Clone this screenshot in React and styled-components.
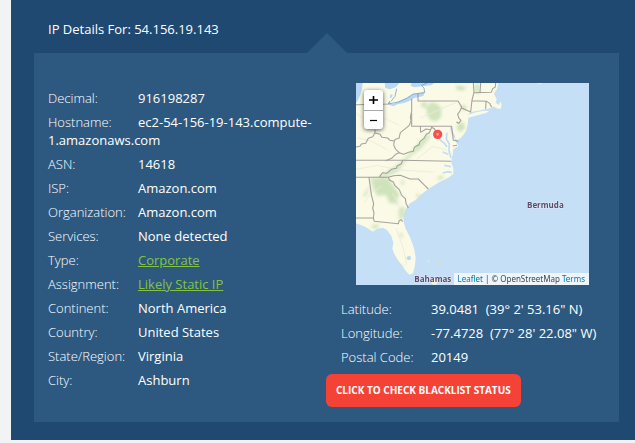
import React from "react";
import styled, { createGlobalStyle } from "styled-components";

const GlobalStyle = createGlobalStyle`
  *, *::before, *::after { box-sizing: border-box; }
  body {
    margin: 0;
    background: #f1f3f5;
    color: #fff;
    font-family: "Open Sans", sans-serif;
    font-size: 13px;
    line-height: 18px;
  }
`;

const Section = styled.main`
  margin-left: 11px;
  padding: 20px 16px 18px 23px;
  background: #1f4971;
`;

const Title = styled.h1`
  margin: 0;
  padding-left: 14px;
  font-size: 13px;
  font-weight: 400;
`;

const Arrow = styled.svg`
  display: block;
  width: 40px;
  height: 20px;
  margin: -5px auto 0;
  fill: #2d5980;
`;

const Panel = styled.section`
  display: grid;
  grid-template-columns: minmax(0, 292fr) minmax(0, 293fr);
  padding: 30px 0 15px;
  background: #2d5980;
`;

const MainColumn = styled.div`
  padding: 6px 10px 0 14px;
`;

const SideColumn = styled.div`
  display: flex;
  flex-direction: column;
  align-items: flex-start;
`;

const List = styled.dl`
  margin: 0;
`;

const SideList = styled(List)`
  padding: 15px 0 2px 15px;
`;

const Row = styled.div`
  padding-bottom: 6px;
`;

const Label = styled.dt`
  display: inline-block;
  width: 90px;
  font-weight: 300;
`;

const Value = styled.dd`
  display: inline;
  margin: 0;
  font-weight: 500;
  white-space: ${(p) => (p.$keepSpaces ? "pre-wrap" : "normal")};
`;

const ValueLink = styled.a`
  color: #83c341;
  font-weight: 400;
  text-decoration: underline;
`;

const MapBox = styled.div`
  position: relative;
  align-self: stretch;
  height: 202px;
  margin: 0 30px;
  overflow: hidden;
  background: #c5dff6;
`;

const MapArt = styled.svg`
  display: block;
  width: 100%;
  height: 100%;
`;

const ZoomControls = styled.div`
  position: absolute;
  top: 7px;
  left: 8px;
  display: flex;
  flex-direction: column;
  width: 19px;
  border-radius: 3px;
  background: #fff;
  box-shadow: 0 1px 4px rgba(0, 0, 0, 0.65);
`;

const ZoomButton = styled.button`
  display: grid;
  place-items: center;
  height: 20px;
  padding: 0;
  border: 0;
  border-radius: 3px;
  background: none;
  color: #000;
  cursor: pointer;

  & + & {
    height: 19px;
    border-top: 1px solid #aaa;
    border-radius: 0 0 3px 3px;
  }
`;

const Attribution = styled.div`
  position: absolute;
  right: 0;
  bottom: 0;
  padding: 0 4px;
  background: rgba(255, 255, 255, 0.7);
  color: #444;
  font-family: "Noto Sans", "Open Sans", sans-serif;
  font-size: 8px;
  line-height: 12px;
  white-space: nowrap;
`;

const AttributionLink = styled.a`
  color: #0078a8;
  text-decoration: none;
`;

const CheckButton = styled.button`
  padding: 8px 10px;
  border: 0;
  border-radius: 6px;
  background: #f44336;
  color: #fff;
  font: 700 10px/17px "Open Sans", sans-serif;
  text-transform: uppercase;
  cursor: pointer;
`;

const details = [
  { label: "Decimal:", value: "916198287" },
  { label: "Hostname:", value: "ec2-54-156-19-143.compute-1.amazonaws.com" },
  { label: "ASN:", value: "14618" },
  { label: "ISP:", value: "Amazon.com" },
  { label: "Organization:", value: "Amazon.com" },
  { label: "Services:", value: "None detected" },
  { label: "Type:", value: "Corporate", link: true },
  { label: "Assignment:", value: "Likely Static IP", link: true },
  { label: "Continent:", value: "North America" },
  { label: "Country:", value: "United States" },
  { label: "State/Region:", value: "Virginia" },
  { label: "City:", value: "Ashburn" },
];

const position = [
  { label: "Latitude:", value: "39.0481  (39° 2' 53.16\" N)" },
  { label: "Longitude:", value: "-77.4728  (77° 28' 22.08\" W)" },
  { label: "Postal Code:", value: "20149" },
];

function DetailRow({ label, value, link }) {
  return (
    <Row>
      <Label>{label}</Label>
      <Value $keepSpaces={value.includes("  ")}>
        {link ? <ValueLink href="#">{value}</ValueLink> : value}
      </Value>
    </Row>
  );
}

function CoastMap() {
  return (
    <MapArt viewBox="18 15 699 606" preserveAspectRatio="xMidYMid slice" role="img" aria-label="Map of the US east coast">
      <defs>
        <filter id="woods" x="-20%" y="-20%" width="140%" height="140%">
          <feGaussianBlur stdDeviation="4" />
        </filter>
      </defs>
      <path
        fill="#fafae6"
        d="M18 15H445L440 35L432 47L440 64L437 74L447 81L452 70L455 82L452 93L440 91L430 85L424 90L405 94L385 98L363 102L352 112L372 104L398 99L418 98L408 105L385 111L355 119L353 140L348 160L335 177L322 187L312 178L318 192L325 204L310 213L307 235L303 252L310 270L310 288L298 297L282 306L265 314L240 330L215 348L196 367L180 376L166 395L160 412L161 432L167 452L180 478L192 510L197 538L195 562L189 586L178 590L168 580L155 561L145 548L134 530L127 512L130 495L124 474L110 455L98 449L82 452L68 461L52 450L38 443L18 436Z"
      />
      <path d="M240 606L250 600L263 613L259 620H249ZM560 15H577L568 18ZM232 549L238 547L236 554Z" fill="#f5f3e2" />
      <g fill="#cfe3bb" filter="url(#woods)">
        <path d="M228 88L245 72L262 78L274 90L273 118L258 130L244 128L232 112ZM213 74L230 72L229 90L216 88Z" opacity="0.95" />
        <path d="M62 300H114L128 320L148 350L140 362L145 378L118 374L108 350L82 354L70 332ZM62 320L50 348L42 358L40 350Z" />
        <path d="M86 298L120 275L150 255L170 235L190 215L205 195L236 165L240 178L212 212L190 228L164 252L145 280L100 300Z" opacity="0.9" />
        <path d="M145 395L155 385L166 392L160 420L148 425ZM152 310L158 306L164 316L156 322ZM198 345L212 352L210 365L200 355Z" opacity="0.9" />
        <path d="M325 138L340 132L346 150L330 163L320 150ZM375 20L387 15L388 48L376 42ZM320 22L350 28L338 38L318 34ZM330 82L350 83L346 95L338 98Z" />
        <path d="M64 442L86 438L84 450L68 452ZM149 465L158 467L157 480L150 478ZM262 298L280 292L278 304L264 305ZM154 560L162 562L158 570Z" opacity="0.9" />
      </g>
      <g fill="#b7d7f3">
        <path d="M18 15H38L36 32L31 50L24 66L18 75Z" />
        <path d="M104 15H148L138 27L120 34L106 30Z" />
        <path d="M115 72L128 79L148 69L165 62L188 48L208 46L224 41L220 54L192 60L180 68L162 75L144 78L130 85L117 80Z" />
        <path d="M184 15H252L244 22L215 25L192 28L182 23Z" />
        <path d="M120 50L128 49L126 58L120 61ZM171 536L181 533L183 543L176 547L170 543Z" />
      </g>
      <path
        d="M291 164L289 184L298 197L297 218L303 240M265 175L273 188L284 197L291 207M278 222L295 229M283 262L303 266M278 285L294 281L305 284M302 147L306 163L314 178"
        fill="none"
        stroke="#c2ddf4"
        strokeWidth="5"
      />
      <path
        d="M18 105L46 124L84 112L148 142M23 180L62 188L112 215M18 274L82 262L146 276L250 282M42 375L66 342L94 325M128 345L148 389M210 120L275 92L322 72M200 244L248 205L290 216M138 452L160 510L170 560"
        fill="none"
        stroke="#ecebd8"
        strokeWidth="2.5"
      />
      <g fill="none" stroke="#928b8c" strokeWidth="3.2" strokeLinejoin="round" opacity="0.8">
        <path d="M18 80L115 78L120 70M75 155V165L68 176L55 181L47 196L34 198L30 205L18 207M75 165L90 169L96 178L113 180L120 187L133 189L136 184L147 181L151 164L166 152L178 142L183 128L181 117L185 100V62" />
        <path d="M185 105V145H305L310 187L325 190M308 204L321 202M211 146L212 163L228 153L242 155L245 148L254 153L257 162" />
        <path d="M204 46V69H324L335 87L330 99L323 109L327 121L333 127L326 136L319 132M335 90L362 102L366 66L372 43L370 15M392 15L390 44M370 44L424 43L428 32L436 27L437 15M365 68L410 70L419 76L425 88M408 70L407 92" />
        <path d="M133 189L131 201L137 214L148 224L137 229L125 241L107 248M148 224L161 229L176 223L190 220L193 208L207 200L210 191L222 181L229 169L238 164L242 155" />
        <path d="M18 247H158L303 250M158 248L153 258L142 263L139 271L124 274L110 286L98 284L87 298M18 298H115L131 293L151 292L180 303H205L221 319L235 333M115 298L118 306L130 312L135 323L148 335L155 352L166 362L168 376L175 390M57 298L64 350L71 378L68 390L72 405L70 420L73 430L145 437L147 429L153 425L158 431M18 420H70" />
      </g>
      <path d="M115 78L145 72L172 60L190 48L224 44L222 30L214 22L232 15M140 32L135 55L123 70" fill="none" stroke="#7899c4" strokeWidth="3" opacity="0.75" />
      <path d="M232 552L241 550M257 546L271 549L274 557L267 564" fill="none" stroke="#deddd5" strokeWidth="3" />
      <circle cx="263" cy="169" r="9" fill="#ff8d85" stroke="#f63f40" strokeWidth="10" opacity="0.9" />
      <g fill="#604969" stroke="#fff" strokeWidth="3" strokeOpacity="0.4" paintOrder="stroke" fontFamily="Open Sans, sans-serif" fontWeight="700" fontSize="24">
        <text x="531" y="391">Bermuda</text>
        <text x="193" y="611">Bahamas</text>
      </g>
    </MapArt>
  );
}

export default function App() {
  return (
    <>
      <GlobalStyle />
      <Section>
        <Title>IP Details For: 54.156.19.143</Title>
        <Arrow viewBox="0 0 40 20" aria-hidden="true">
          <path d="M0 20L20 0L40 20Z" />
        </Arrow>
        <Panel>
          <MainColumn>
            <List>
              {details.map((item) => (
                <DetailRow key={item.label} {...item} />
              ))}
            </List>
          </MainColumn>
          <SideColumn>
            <MapBox>
              <CoastMap />
              <ZoomControls>
                <ZoomButton type="button" aria-label="Zoom in">
                  <svg width="9" height="8" viewBox="0 0 9 8" stroke="#000" strokeWidth="1.6" aria-hidden="true">
                    <path d="M0 4H9M4.5 0V8" />
                  </svg>
                </ZoomButton>
                <ZoomButton type="button" aria-label="Zoom out">
                  <svg width="7" height="8" viewBox="0 0 7 8" stroke="#000" strokeWidth="1.2" aria-hidden="true">
                    <path d="M0 4.5H7" />
                  </svg>
                </ZoomButton>
              </ZoomControls>
              <Attribution>
                <AttributionLink href="#">Leaflet</AttributionLink> | © OpenStreetMap{" "}
                <AttributionLink href="#">Terms</AttributionLink>
              </Attribution>
            </MapBox>
            <SideList>
              {position.map((item) => (
                <DetailRow key={item.label} {...item} />
              ))}
            </SideList>
            <CheckButton type="button">Click to check blacklist status</CheckButton>
          </SideColumn>
        </Panel>
      </Section>
    </>
  );
}
